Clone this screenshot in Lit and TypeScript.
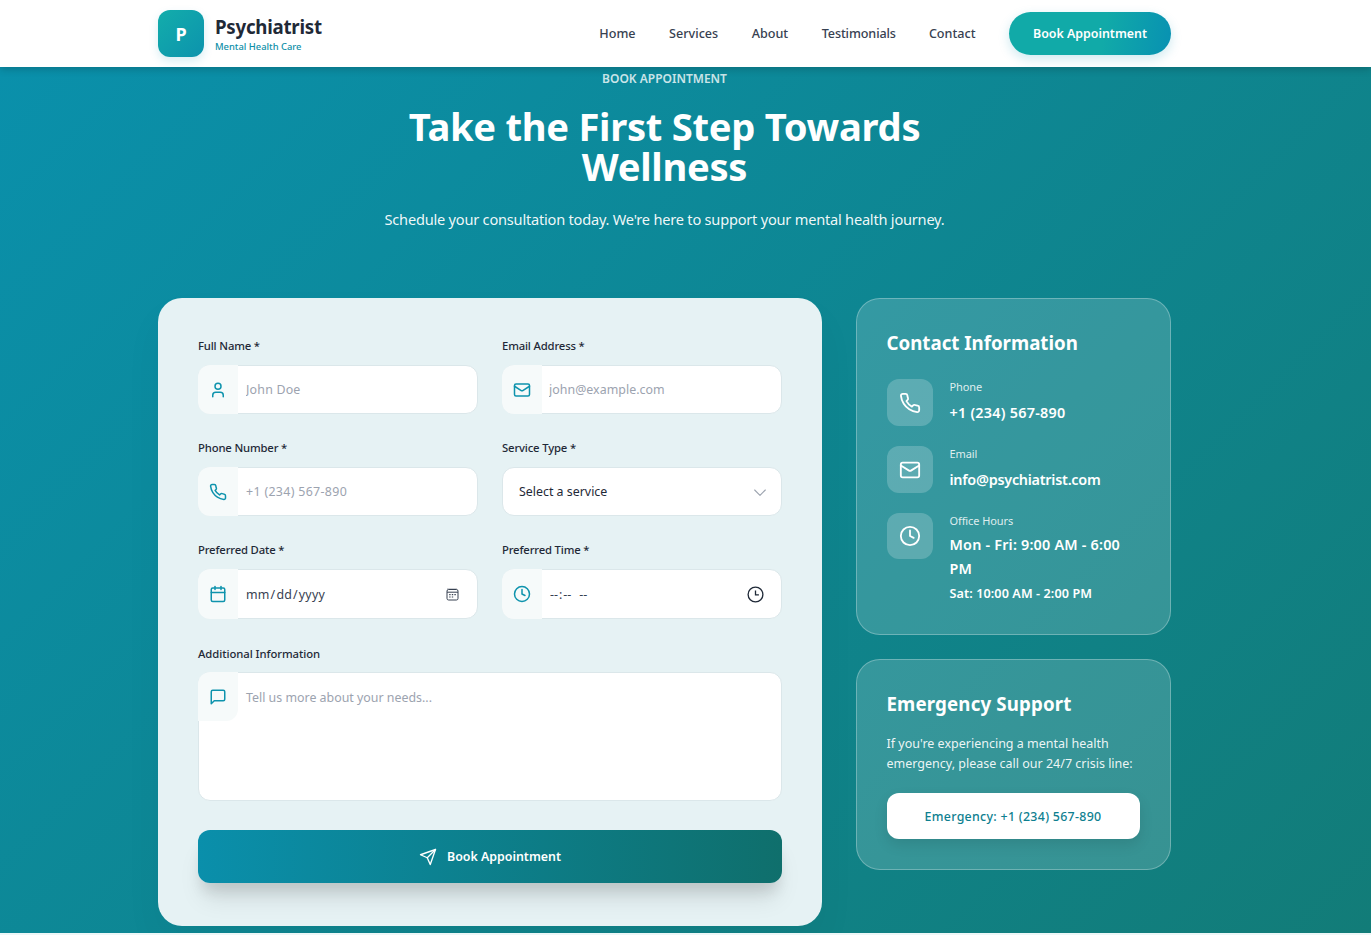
import { LitElement, html, css, svg } from "lit";
import { customElement } from "lit/decorators.js";

const ic = (body: unknown, size = 20, sw = 2) => html`<svg width=${size} height=${size} viewBox="0 0 24 24" fill="none" stroke="currentColor" stroke-width=${sw} stroke-linecap="round" stroke-linejoin="round">${body}</svg>`;
const user = svg`<path d="M19 21v-2a4 4 0 0 0-4-4H9a4 4 0 0 0-4 4v2"/><circle cx="12" cy="7" r="4"/>`;
const mail = svg`<rect x="2" y="4" width="20" height="16" rx="2"/><path d="m22 7-8.97 5.7a1.94 1.94 0 0 1-2.06 0L2 7"/>`;
const phone = svg`<path d="M22 16.92v3a2 2 0 0 1-2.18 2 19.79 19.79 0 0 1-8.63-3.07 19.5 19.5 0 0 1-6-6 19.79 19.79 0 0 1-3.07-8.67A2 2 0 0 1 4.11 2h3a2 2 0 0 1 2 1.72 12.84 12.84 0 0 0 .7 2.81 2 2 0 0 1-.45 2.11L8.09 9.91a16 16 0 0 0 6 6l1.27-1.27a2 2 0 0 1 2.11-.45 12.84 12.84 0 0 0 2.81.7A2 2 0 0 1 22 16.92z"/>`;
const cal = svg`<path d="M8 2v4"/><path d="M16 2v4"/><rect x="3" y="4" width="18" height="18" rx="2"/><path d="M3 10h18"/>`;
const clock = svg`<circle cx="12" cy="12" r="10"/><path d="M12 6v6l4 2"/>`;
const msg = svg`<path d="M21 15a2 2 0 0 1-2 2H7l-4 4V5a2 2 0 0 1 2-2h14a2 2 0 0 1 2 2z"/>`;
const send = svg`<path d="m22 2-7 20-4-9-9-4Z"/><path d="M22 2 11 13"/>`;
const pickerCal = html`<svg class="picker cal" width="13" height="13" viewBox="0 0 13 13" fill="none" stroke="#374151"><rect x="1" y="1.5" width="11" height="10.5" rx="1.6" stroke-width="1"/><path d="M1 4.2h11" stroke-width="1"/><path d="M1.5 .9h10" stroke-width=".8" stroke-dasharray="1 1"/><path d="M3.2 6.6h1.4M5.8 6.6h1.4M8.4 6.6h1.4M3.2 9h1.4M5.8 9h1.4" stroke-width="1.1"/></svg>`;
const pickerClock = html`<svg class="picker clk" width="17" height="17" viewBox="0 0 17 17" fill="none" stroke="#1f2937" stroke-width="1.3"><circle cx="8.5" cy="8.5" r="7.4"/><path d="M8.5 4.4v4.4h3.4"/></svg>`;

@customElement("app-root")
export class AppRoot extends LitElement {
  static styles = css`
    :host { display: block; font-family: "Noto Sans", "Open Sans", sans-serif; color: #1f2937; background: #edf7f7; min-height: 935px; }
    * { box-sizing: border-box; }
    .header { height: 67px; background: #fff; box-shadow: 0 2px 8px rgba(0,0,0,.2); position: relative; z-index: 2; }
    .wrap { width: 1013px; margin-left: 158px; }
    .header .wrap { height: 67px; display: flex; align-items: center; justify-content: space-between; }
    .brand { display: flex; align-items: center; gap: 11px; }
    .logo { width: 46px; height: 47px; border-radius: 12px; background: linear-gradient(135deg, #13adab, #0c93ad); color: #fff; display: flex; align-items: center; justify-content: center; font-weight: 700; font-size: 18px; box-shadow: 0 4px 10px rgba(8,145,178,.16); }
    .brand-text { display: flex; flex-direction: column; gap: 1px; }
    .brand-name { font-size: 18.7px; font-weight: 700; line-height: 24px; color: #1f2937; letter-spacing: -.25px; }
    .brand-sub { font-size: 9.4px; line-height: 13px; color: #0e8fa8; font-weight: 500; }
    .nav { display: flex; align-items: center; }
    .nav a { font-size: 12.6px; color: #374151; font-weight: 500; margin-right: 33.5px; }
    .nav a:nth-child(4) { letter-spacing: -.1px; margin-right: 33px; }
    .cta { width: 162px; height: 43px; border-radius: 22px; background: linear-gradient(100deg, #11aaa8 0%, #11aaa8 58%, #0891b2 100%); color: #fff; font-size: 12.4px; font-weight: 600; display: flex; align-items: center; justify-content: center; box-shadow: 0 4px 12px rgba(8,145,178,.2); }
    .hero { height: 866px; background: linear-gradient(135deg, #0a90ab 0%, #127c78 100%); overflow: hidden; }
    .intro { text-align: center; display: flex; flex-direction: column; align-items: center; width: 1013px; margin-left: 158px; }
    .kicker { margin-top: 1px; font-size: 12px; line-height: 22px; font-weight: 600; color: rgba(255,255,255,.8); height: 22px; }
    h1 { margin: 16px 0 0; width: 620px; font-size: 38.2px; line-height: 40px; font-weight: 700; color: #fff; letter-spacing: -.3px; }
    .lead { margin: 21px 0 0; font-size: 14.6px; line-height: 24px; color: rgba(255,255,255,.95); letter-spacing: -.22px; }
    .grid { display: flex; gap: 34px; align-items: flex-start; margin-top: 67px; }
    .form { width: 664px; height: 628px; background: #e6f2f4; border-radius: 24px; padding: 39px 40px 0; box-shadow: 0 20px 40px rgba(0,0,0,.04); }
    .cols { display: grid; grid-template-columns: 280px 280px; column-gap: 24px; row-gap: 25px; }
    .field label { display: block; font-size: 11.3px; line-height: 18px; font-weight: 500; color: #1f2937; margin-bottom: 10px; letter-spacing: -.16px; }
    .control { height: 49px; background: #fff; border: 1px solid #dbe7ea; border-radius: 12px; display: flex; align-items: center; position: relative; }
    .tall { height: 50px; }
    .adorn { width: 40px; margin: -1px 0 -1px -1px; align-self: stretch; flex: none; background: #f6fafa; border-radius: 12px 0 0 12px; color: #0e93ad; display: flex; align-items: center; justify-content: center; }
    input, select, textarea { border: 0; outline: 0; background: transparent; font-family: inherit; font-size: 12.4px; color: #374151; min-width: 0; flex: 1; }
    input { padding: 0 8px; align-self: stretch; }
    input::placeholder, textarea::placeholder { color: #9ca3af; opacity: 1; }
    input[type=tel] { letter-spacing: .33px; }
    input[type=text] { letter-spacing: .2px; }
    input[type=email] { padding-left: 7px; letter-spacing: .03px; }
    input[type=date] { letter-spacing: .2px; padding-left: 7px; }
    input[type=time] { padding-left: 7px; }
    input[type=time]::-webkit-datetime-edit-hour-field,
    input[type=time]::-webkit-datetime-edit-minute-field,
    input[type=time]::-webkit-datetime-edit-ampm-field { letter-spacing: 1.6px; }
    input[type=time]::-webkit-datetime-edit-ampm-field { margin-left: 4px; }
    input::-webkit-calendar-picker-indicator { display: none; }
    .picker { flex: none; }
    .cal { margin-right: 18px; }
    .clk { margin-right: 17px; }
    select { padding: 0 16px; appearance: none; align-self: stretch; color: #1f2937; }
    .chev { position: absolute; right: 13px; top: 16px; color: #9ca3af; pointer-events: none; line-height: 0; }
    .full { margin-top: 26px; }
    .full label { margin-bottom: 9px; letter-spacing: -.07px; }
    .area { height: 129px; align-items: flex-start; }
    .area .adorn { height: 49px; align-self: auto; flex: none; border-radius: 12px 0 12px 0; }
    textarea { padding: 16px 8px; height: 127px; resize: none; }
    .submit { margin-top: 29px; width: 584px; height: 53px; border: 0; border-radius: 12px; background: linear-gradient(90deg, #0a8fab 0%, #0f6f6c 100%); color: #fff; font-family: inherit; font-size: 12.4px; font-weight: 600; display: flex; align-items: center; justify-content: center; gap: 10px; box-shadow: 0 20px 25px -5px rgba(0,0,0,.1), 0 12px 14px -4px rgba(0,0,0,.1); }
    .side { width: 315px; display: flex; flex-direction: column; gap: 24px; }
    .card { background: rgba(255,255,255,.16); border: 1px solid rgba(255,255,255,.28); border-radius: 24px; padding: 30px 30.5px 30px 29.5px; color: #fff; }
    h3 { margin: 0; font-size: 18.7px; line-height: 28px; font-weight: 700; }
    h3.wide { letter-spacing: .15px; }
    .info { display: flex; gap: 17px; }
    h3 + .info { margin-top: 22px; }
    .info + .info { margin-top: 20px; }
    .tile { width: 46px; height: 47px; flex: none; border-radius: 12px; background: rgba(255,255,255,.2); display: flex; align-items: center; justify-content: center; }
    .info:last-child .tile { height: 46px; }
    .info-label { font-size: 11px; line-height: 18px; margin-top: -1px; color: rgba(255,255,255,.85); letter-spacing: -.1px; }
    .info-value { font-size: 14.4px; line-height: 24px; font-weight: 600; margin-top: 5px; }
    .v-phone { letter-spacing: .25px; }
    .v-mail { letter-spacing: -.25px; }
    .v-hours { letter-spacing: .2px; margin-top: 3px; }
    .info-small { font-size: 12.6px; line-height: 20px; font-weight: 600; margin-top: 3px; letter-spacing: .1px; }
    .card p { margin: 16px 0 0; font-size: 12.5px; line-height: 20px; color: rgba(255,255,255,.92); }
    .em { margin-top: 19px; height: 46px; border-radius: 12px; background: #fff; color: #0e8090; font-size: 12.4px; letter-spacing: .3px; font-weight: 500; display: flex; align-items: center; justify-content: center; box-shadow: 0 6px 14px rgba(0,0,0,.1); }
  `;

  field(label: string, icon: unknown, type: string, ph = "", tail: unknown = "", tall = false) {
    return html`<div class="field"><label>${label}</label><div class="control ${tall ? "tall" : ""}"><span class="adorn">${ic(icon, 18)}</span><input type=${type} placeholder=${ph} />${tail}</div></div>`;
  }

  render() {
    return html`
      <header class="header"><div class="wrap">
        <div class="brand"><div class="logo">P</div><div class="brand-text"><span class="brand-name">Psychiatrist</span><span class="brand-sub">Mental Health Care</span></div></div>
        <nav class="nav"><a>Home</a><a>Services</a><a>About</a><a>Testimonials</a><a>Contact</a><div class="cta">Book Appointment</div></nav>
      </div></header>
      <section class="hero">
        <div class="intro">
          <div class="kicker">BOOK APPOINTMENT</div>
          <h1>Take the First Step Towards Wellness</h1>
          <p class="lead">Schedule your consultation today. We're here to support your mental health journey.</p>
        </div>
        <div class="wrap grid">
          <form class="form">
            <div class="cols">
              ${this.field("Full Name *", user, "text", "John Doe")}
              ${this.field("Email Address *", mail, "email", "john@example.com")}
              ${this.field("Phone Number *", phone, "tel", "+1 (234) 567-890")}
              <div class="field"><label>Service Type *</label><div class="control"><select><option>Select a service</option></select><span class="chev">${ic(svg`<path d="m4 9 8 8 8-8"/>`, 16, 1.6)}</span></div></div>
              ${this.field("Preferred Date *", cal, "date", "", pickerCal, true)}
              ${this.field("Preferred Time *", clock, "time", "", pickerClock, true)}
            </div>
            <div class="field full"><label>Additional Information</label><div class="control area"><span class="adorn">${ic(msg, 18)}</span><textarea placeholder="Tell us more about your needs..."></textarea></div></div>
            <button type="button" class="submit">${ic(send, 18, 1.8)}Book Appointment</button>
          </form>
          <aside class="side">
            <div class="card">
              <h3>Contact Information</h3>
              <div class="info"><span class="tile">${ic(phone, 22)}</span><div><div class="info-label">Phone</div><div class="info-value v-phone">+1 (234) 567-890</div></div></div>
              <div class="info"><span class="tile">${ic(mail, 22)}</span><div><div class="info-label">Email</div><div class="info-value v-mail">info@psychiatrist.com</div></div></div>
              <div class="info"><span class="tile">${ic(clock, 22)}</span><div><div class="info-label">Office Hours</div><div class="info-value v-hours">Mon - Fri: 9:00 AM - 6:00 PM</div><div class="info-small">Sat: 10:00 AM - 2:00 PM</div></div></div>
            </div>
            <div class="card">
              <h3 class="wide">Emergency Support</h3>
              <p>If you're experiencing a mental health emergency, please call our 24/7 crisis line:</p>
              <div class="em">Emergency: +1 (234) 567-890</div>
            </div>
          </aside>
        </div>
      </section>
    `;
  }
}
